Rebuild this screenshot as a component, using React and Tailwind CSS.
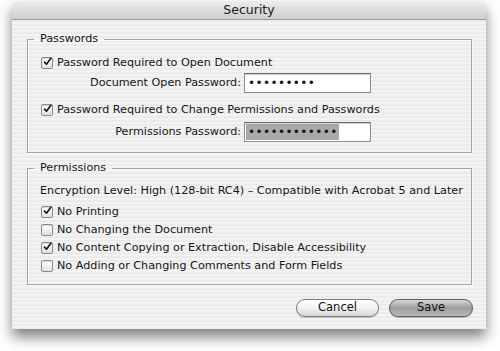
import React from 'react';

// Aqua-style checkbox
const Check = ({ checked }) => (
  <span className="w-[12px] h-[12px] shrink-0 rounded-[2px] border border-[#8a8a8a] bg-gradient-to-b from-white to-[#e2e2e2] shadow-[inset_0_1px_1px_rgba(0,0,0,0.15)] flex items-center justify-center">
    {checked && (
      <svg width="12" height="12" viewBox="0 0 12 12" className="-mt-[2px] ml-[1px]">
        <path d="M2 6.2 L4.6 9 L10.5 1" fill="none" stroke="#111" strokeWidth="2.1" strokeLinecap="round" strokeLinejoin="round" />
      </svg>
    )}
  </span>
);

const CheckRow = ({ checked, label, className = '' }) => (
  <div className={`h-[18px] flex items-center gap-[4px] ${className}`}>
    <Check checked={checked} />
    <span>{label}</span>
  </div>
);

// Password field with bullet dots
const PasswordField = ({ count, selected }) => (
  <div className="w-[127px] h-[20px] bg-white border border-[#8e8e8e] border-t-[#6e6e6e] shadow-[inset_0_1px_1px_rgba(0,0,0,0.2)] flex items-center pl-[1px]">
    <span className={`h-[16px] flex items-center pl-[2px] pr-[1px] text-[12px] tracking-[0.4px] leading-none ${selected ? 'bg-[#a9a9a9]' : ''}`}>
      {'\u2022'.repeat(count)}
    </span>
  </div>
);

const Group = ({ title, children, className = '' }) => (
  <fieldset className={`mx-[15px] mr-[14px] border border-[#a3a3a3] shadow-[inset_1px_1px_0_#fafafa,1px_1px_0_#fafafa] ${className}`}>
    <legend className="ml-[6px] px-[6px] h-[16px] leading-[16px]">{title}</legend>
    {children}
  </fieldset>
);

export default function App() {
  return (
    <div className="w-[500px] h-[351px] bg-white overflow-hidden pt-[1px] pl-[12px] font-['DejaVu_Sans',sans-serif] text-[11.2px] text-[#161616]">
      <div className="w-[474px] h-[328px] rounded-t-[5px] shadow-[0_8px_14px_rgba(0,0,0,0.5)] flex flex-col overflow-hidden">
        {/* Title bar */}
        <div className="h-[19px] shrink-0 bg-gradient-to-b from-[#ececec] to-[#cfcfcf] border-b border-[#9a9a9a] flex items-center justify-center text-[12.5px] text-[#1a1a1a]">
          Security
        </div>

        {/* Body */}
        <div className="flex-1 flex flex-col bg-[repeating-linear-gradient(180deg,#ebebeb_0px,#ebebeb_2px,#f3f3f3_2px,#f3f3f3_4px)]">
          <Group title="Passwords" className="mt-[11px] pb-[10px]">
            <CheckRow checked label="Password Required to Open Document" className="mt-[7px] pl-[13px]" />
            <div className="mt-[1px] flex items-center">
              <span className="w-[213px] text-right">Document Open Password:</span>
              <div className="ml-[3px]">
                <PasswordField count={9} />
              </div>
            </div>
            <CheckRow checked label="Password Required to Change Permissions and Passwords" className="mt-[8px] pl-[13px]" />
            <div className="mt-[3px] flex items-center">
              <span className="w-[213px] text-right">Permissions Password:</span>
              <div className="ml-[3px]">
                <PasswordField count={12} selected />
              </div>
            </div>
          </Group>

          <Group title="Permissions" className="mt-[7px] pb-[9px]">
            <div className="mt-[6px] h-[18px] flex items-center pl-[12px]">
              Encryption Level: High (128-bit RC4) – Compatible with Acrobat 5 and Later
            </div>
            <div className="mt-[3px] flex flex-col">
              <CheckRow checked label="No Printing" className="h-[17.7px] pl-[13px]" />
              <CheckRow label="No Changing the Document" className="h-[17.7px] pl-[13px]" />
              <CheckRow checked label="No Content Copying or Extraction, Disable Accessibility" className="h-[17.7px] pl-[13px]" />
              <CheckRow label="No Adding or Changing Comments and Form Fields" className="h-[17.7px] pl-[13px]" />
            </div>
          </Group>

          <div className="mt-[14px] pr-[13px] flex justify-end gap-[10px]">
            <button className="w-[83px] h-[18px] rounded-full border border-[#7b7b7b] bg-gradient-to-b from-white via-[#f2f2f2] to-[#d6d6d6] shadow-[0_1px_1px_rgba(0,0,0,0.2)] text-[11.5px] leading-none text-[#111]">
              Cancel
            </button>
            <button className="w-[84px] h-[18px] rounded-full border border-[#5e5e5e] bg-gradient-to-b from-[#d8d8d8] via-[#9d9d9d] to-[#b9b9b9] shadow-[0_1px_1px_rgba(0,0,0,0.25)] text-[11.5px] leading-none text-[#111]">
              Save
            </button>
          </div>
        </div>
      </div>
    </div>
  );
}
